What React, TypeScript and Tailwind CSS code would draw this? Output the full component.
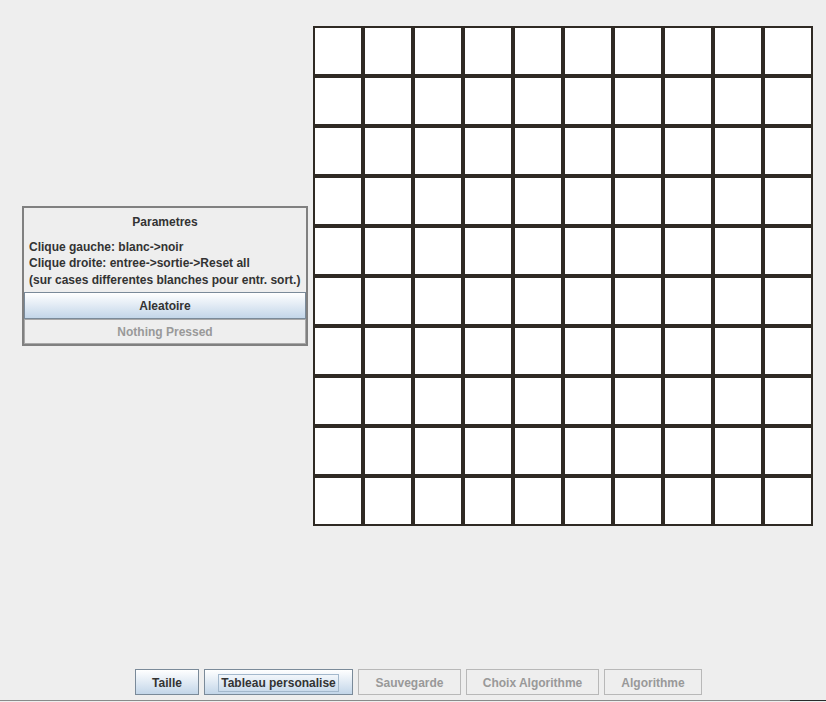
import React from "react";

const cells = Array.from({ length: 100 }, (_, i) => i);

function Panel() {
  return (
    <div className="w-[286px] border-2 border-[#808080] flex flex-col text-[12px] font-bold text-[#333333]">
      {/* Header */}
      <div className="text-center pt-[6px] leading-[16px]">Parametres</div>
      {/* Instructions */}
      <div className="pl-[5px] pt-[9px] pb-[4px] leading-[16.5px]">
        <div>Clique gauche: blanc-&gt;noir</div>
        <div>Clique droite: entree-&gt;sortie-&gt;Reset all</div>
        <div>(sur cases differentes blanches pour entr. sort.)</div>
      </div>
      <button className="h-[27px] border border-[#7a8a99] bg-gradient-to-b from-white to-[#c3d6e9] text-[#333333]">
        Aleatoire
      </button>
      <div className="h-[25px] border border-[#a8a8a8] flex items-center justify-center text-[#999999]">
        Nothing Pressed
      </div>
    </div>
  );
}

function Grid() {
  return (
    <div className="grid grid-cols-10 w-[500px] h-[500px]">
      {cells.map((c) => (
        <div key={c} className="border-2 border-[#2f2a24] bg-white" />
      ))}
    </div>
  );
}

const buttons = [
  { label: "Taille", w: "w-[64px]", enabled: true },
  { label: "Tableau personalise", w: "w-[149px]", enabled: true, focus: true },
  { label: "Sauvegarde", w: "w-[103px]", enabled: false },
  { label: "Choix Algorithme", w: "w-[133px]", enabled: false },
  { label: "Algorithme", w: "w-[98px]", enabled: false },
];

export default function App() {
  return (
    <div
      className="w-[826px] h-[702px] bg-[#eeeeee] flex flex-col overflow-hidden"
      style={{ fontFamily: '"Liberation Sans", Arial, sans-serif' }}
    >
      {/* Main area */}
      <div className="flex items-center pl-[22px] pt-[26px] gap-[5px]">
        <Panel />
        <Grid />
      </div>

      {/* Bottom buttons */}
      <div className="mt-auto flex gap-[5px] pl-[135px] pb-[5px]">
        {buttons.map((b) =>
          b.enabled ? (
            <button
              key={b.label}
              className={`${b.w} h-[26px] pt-[2px] border border-[#7a8a99] bg-gradient-to-b from-white to-[#c3d6e9] text-[12px] font-bold text-[#333333] flex items-center justify-center`}
            >
              {b.focus ? (
                <span className="border border-[#a3b8cc] px-[2px] leading-[16px]">{b.label}</span>
              ) : (
                b.label
              )}
            </button>
          ) : (
            <button
              key={b.label}
              className={`${b.w} h-[26px] pt-[2px] border border-[#b8b8b8] bg-[#eeeeee] text-[12px] font-bold text-[#999999] flex items-center justify-center`}
            >
              {b.label}
            </button>
          )
        )}
      </div>
      <div className="flex h-[1px]">
        <div className="flex-1 bg-[#8a8a8a]" />
        <div className="w-[36px] bg-[#2a2a2a]" />
      </div>
      <div className="h-[1px]" />
    </div>
  );
}
